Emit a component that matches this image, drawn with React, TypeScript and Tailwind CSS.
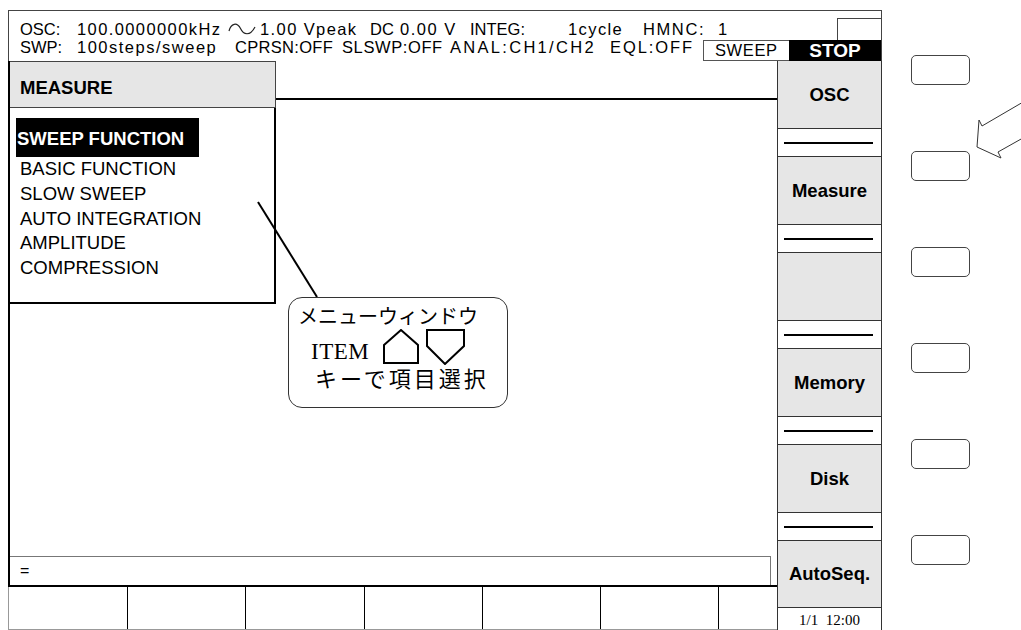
export default function App() {
  const keyCls =
    "flex h-[67px] items-center justify-center bg-[#e6e6e6] text-[18.5px] font-bold leading-[20px]";
  const sepCls = "flex h-[29px] items-center border-y border-[#333] bg-white pl-[6px] pr-[8px]";
  return (
    <div className="relative h-[630px] w-[1021px] overflow-hidden bg-white font-['Liberation_Sans',Arial,sans-serif] text-black">
      <div className="flex pl-[8px] pt-[10px]">
        {/* instrument screen */}
        <div className="flex w-[874px] flex-col">
          {/* header */}
          <div className="flex h-[51px] flex-col border-x border-t border-[#444]">
            <div className="flex h-[29px] items-start text-[16.5px] leading-[18px]">
              <div className="flex whitespace-nowrap pl-[11px] pt-[9px]">
                <span className="w-[57px] shrink-0">OSC:</span>
                <span className="w-[151px] shrink-0 tracking-[1.4px]">100.0000000kHz</span>
                <span className="flex h-[18px] w-[32px] shrink-0 items-center">
                  <svg width="28" height="14" viewBox="0 0 28 14" fill="none">
                    <path d="M1 9 C3 1, 9 0, 12.5 6.5 C15.5 13, 22 14.5, 27 5" stroke="#222" strokeWidth="1.2" />
                  </svg>
                </span>
                <span className="w-[110px] shrink-0 tracking-[1.4px]">1.00 Vpeak</span>
                <span className="w-[30px] shrink-0">DC</span>
                <span className="w-[70px] shrink-0 tracking-[1.5px]">0.00 V</span>
                <span className="w-[98px] shrink-0">INTEG:</span>
                <span className="w-[75px] shrink-0 tracking-[1.4px]">1cycle</span>
                <span className="w-[75px] shrink-0 tracking-[1.6px]">HMNC:</span>
                <span className="shrink-0">1</span>
              </div>
              <div className="ml-auto mt-[7px] h-[22px] w-[44px] border-l border-t border-[#444]" />
            </div>
            <div className="flex h-[21px] items-start whitespace-nowrap text-[16.5px] leading-[14px]">
              <div className="flex pl-[11px]">
                <span className="w-[57px] shrink-0">SWP:</span>
                <span className="w-[158px] shrink-0 tracking-[1.5px]">100steps/sweep</span>
                <span className="w-[107px] shrink-0 tracking-[0.3px]">CPRSN:OFF</span>
                <span className="w-[108px] shrink-0 tracking-[0.6px]">SLSWP:OFF</span>
                <span className="w-[160px] shrink-0 tracking-[2.3px]">ANAL:CH1/CH2</span>
                <span className="w-[93px] shrink-0 tracking-[1.9px]">EQL:OFF</span>
              </div>
              <div className="h-[21px] w-[86px] shrink-0 border-y border-l border-[#555] pl-[11px] pt-[2px] tracking-[0.6px]">
                SWEEP
              </div>
              <div className="flex h-[21px] flex-1 justify-center bg-black pt-[1px] text-[19px] font-bold leading-[19px] text-white">
                STOP
              </div>
            </div>
          </div>

          <div className="flex">
            {/* main area */}
            <div className="flex w-[769px] flex-col">
              <div className="flex h-[526px] flex-col border-b-2 border-l-2 border-black">
                <div className="flex items-start">
                  <div className="h-[47px] w-[266px] shrink-0 border-y border-r border-[#444] bg-[#e6e6e6] pl-[10px] pt-[16px] text-[18.5px] font-bold leading-[20px]">
                    MEASURE
                  </div>
                  <div className="h-[39px] flex-1 border-b-2 border-black" />
                </div>
                <div className="h-[196px] w-[266px] border-b-2 border-r-2 border-black pl-[6px] pt-[10px] text-[18.5px] leading-[24.8px]">
                  <div className="h-[39px] w-[183px] bg-black pl-[1px] font-bold leading-[41px] text-white">
                    SWEEP FUNCTION
                  </div>
                  <div className="pl-[4px]">BASIC FUNCTION</div>
                  <div className="pl-[4px]">SLOW SWEEP</div>
                  <div className="pl-[4px]">AUTO INTEGRATION</div>
                  <div className="pl-[4px]">AMPLITUDE</div>
                  <div className="pl-[4px]">COMPRESSION</div>
                </div>
                <div className="flex-1" />
                <div className="flex h-[29px] w-[761px] items-center border-r border-t border-[#777] pl-[10px] text-[16px] leading-[16px]">
                  =
                </div>
              </div>
              <div className="flex h-[43px] border-b border-l border-[#999]">
                <div className="w-[119px] border-r border-black" />
                <div className="w-[118px] border-r border-black" />
                <div className="w-[119px] border-r border-black" />
                <div className="w-[118px] border-r border-black" />
                <div className="w-[118px] border-r border-black" />
                <div className="w-[118px] border-r border-black" />
                <div className="flex-1" />
              </div>
            </div>

            {/* soft keys */}
            <div className="flex h-[569px] w-[105px] flex-col border-x border-[#333]">
              <div className={keyCls}>OSC</div>
              <div className={sepCls}>
                <div className="h-[2px] w-full bg-black" />
              </div>
              <div className={keyCls}>Measure</div>
              <div className={sepCls}>
                <div className="h-[2px] w-full bg-black" />
              </div>
              <div className={keyCls} />
              <div className={sepCls}>
                <div className="h-[2px] w-full bg-black" />
              </div>
              <div className={keyCls}>Memory</div>
              <div className={sepCls}>
                <div className="h-[2px] w-full bg-black" />
              </div>
              <div className={keyCls}>Disk</div>
              <div className={sepCls}>
                <div className="h-[2px] w-full bg-black" />
              </div>
              <div className={keyCls + " border-b border-[#333]"}>AutoSeq.</div>
              <div className="flex flex-1 justify-center pt-[4px] font-['Liberation_Serif',serif] text-[15px] leading-[17px] whitespace-pre">
                {"1/1  12:00"}
              </div>
            </div>
          </div>
        </div>

        {/* hardware buttons */}
        <div className="ml-[29px] flex w-[59px] flex-col gap-[66px] pt-[45px]">
          {[0, 1, 2, 3, 4, 5].map((i) => (
            <div key={i} className="h-[30px] w-[59px] rounded-[5px] border border-[#444] bg-white" />
          ))}
        </div>
      </div>

      {/* arrow annotation */}
      <svg className="absolute left-[970px] top-[90px]" width="51" height="80" viewBox="0 0 51 80" fill="none">
        <path
          d="M60 8 L12 36 L9 30 L7 57 L31 68 L28 62 L60 44"
          fill="white"
          stroke="#333"
          strokeWidth="1"
          strokeLinejoin="miter"
        />
      </svg>

      {/* pointer line */}
      <svg className="absolute left-[255px] top-[198px]" width="66" height="102" viewBox="0 0 66 102" fill="none">
        <line x1="3" y1="4" x2="62" y2="99" stroke="#000" strokeWidth="2" />
      </svg>

      {/* callout */}
      <div className="absolute left-[288px] top-[297px] flex h-[111px] w-[220px] flex-col rounded-[14px] border border-[#333] bg-white font-['Liberation_Serif','Noto_Sans_CJK_JP',serif]">
        <div className="pl-[9px] pt-[8px] text-[20px] leading-[22px] whitespace-nowrap">メニューウィンドウ</div>
        <div className="flex items-end pl-[22px] pt-[1px]">
          <span className="text-[23px] leading-[26px] tracking-[0.5px]">ITEM</span>
          <svg className="ml-[14px]" width="36" height="36" viewBox="0 0 36 36" fill="none">
            <path d="M1 16 L18 1 L35 16 L35 34 L1 34 Z" stroke="#000" strokeWidth="2" strokeLinejoin="miter" />
          </svg>
          <svg className="ml-[7px]" width="40" height="36" viewBox="0 0 40 36" fill="none">
            <path d="M1 1 L38 1 L38 17 L19 35 L1 17 Z" stroke="#000" strokeWidth="2" strokeLinejoin="miter" />
          </svg>
        </div>
        <div className="pl-[26px] pt-[3px] text-[22px] leading-[24px] tracking-[3px] whitespace-nowrap">キーで項目選択</div>
      </div>
    </div>
  );
}
